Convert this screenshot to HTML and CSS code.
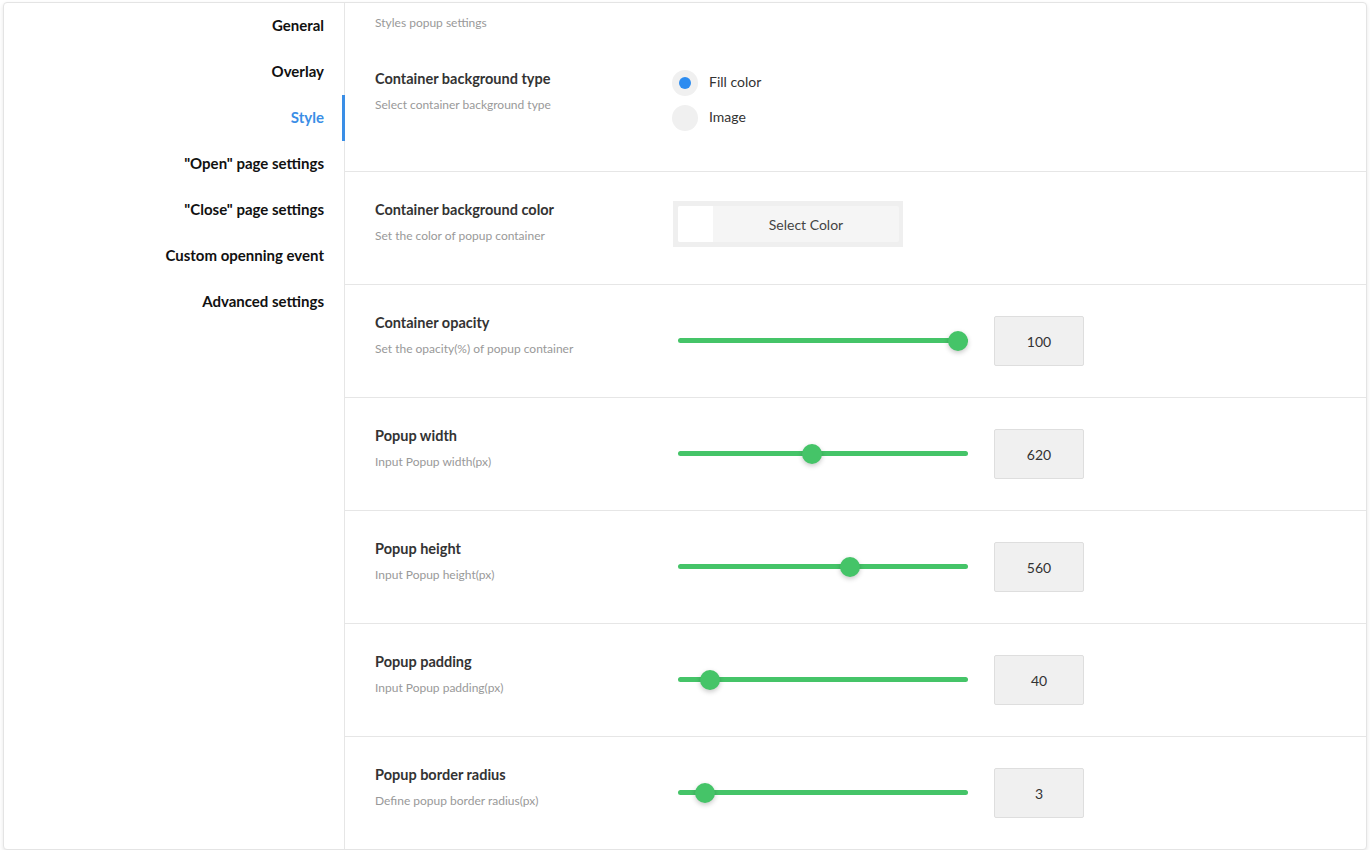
FILE: index.html
```html
<!DOCTYPE html>
<html>
<head>
<meta charset="utf-8">
<link rel="stylesheet" href="styles.css">
</head>
<body>
<div class="card">
  <nav class="sidebar">
    <div class="nav-item">General</div>
    <div class="nav-item">Overlay</div>
    <div class="nav-item active">Style</div>
    <div class="nav-item">"Open" page settings</div>
    <div class="nav-item">"Close" page settings</div>
    <div class="nav-item">Custom openning event</div>
    <div class="nav-item">Advanced settings</div>
  </nav>
  <main class="content">
    <div class="header">Styles popup settings</div>

    <div class="row row-first">
      <div class="label">
        <div class="title">Container background type</div>
        <div class="sub">Select container background type</div>
      </div>
      <div class="control radios">
        <div class="radio checked"><span class="dot"></span><span class="rlabel">Fill color</span></div>
        <div class="radio"><span class="dot"></span><span class="rlabel">Image</span></div>
      </div>
    </div>

    <div class="row">
      <div class="label">
        <div class="title">Container background color</div>
        <div class="sub">Set the color of popup container</div>
      </div>
      <div class="control color-ctl">
        <div class="color-box">
          <div class="color-inner"><span class="swatch"></span><span class="ctext">Select Color</span></div>
        </div>
      </div>
    </div>

    <div class="row">
      <div class="label">
        <div class="title">Container opacity</div>
        <div class="sub">Set the opacity(%) of popup container</div>
      </div>
      <div class="control slider-ctl">
        <div class="track"><span class="thumb" style="left: 96.55%"></span></div>
        <div class="num">100</div>
      </div>
    </div>

    <div class="row">
      <div class="label">
        <div class="title">Popup width</div>
        <div class="sub">Input Popup width(px)</div>
      </div>
      <div class="control slider-ctl">
        <div class="track"><span class="thumb" style="left: 46.2%"></span></div>
        <div class="num">620</div>
      </div>
    </div>

    <div class="row">
      <div class="label">
        <div class="title">Popup height</div>
        <div class="sub">Input Popup height(px)</div>
      </div>
      <div class="control slider-ctl">
        <div class="track"><span class="thumb" style="left: 59.3%"></span></div>
        <div class="num">560</div>
      </div>
    </div>

    <div class="row">
      <div class="label">
        <div class="title">Popup padding</div>
        <div class="sub">Input Popup padding(px)</div>
      </div>
      <div class="control slider-ctl">
        <div class="track"><span class="thumb" style="left: 11.03%"></span></div>
        <div class="num">40</div>
      </div>
    </div>

    <div class="row">
      <div class="label">
        <div class="title">Popup border radius</div>
        <div class="sub">Define popup border radius(px)</div>
      </div>
      <div class="control slider-ctl">
        <div class="track"><span class="thumb" style="left: 9.31%"></span></div>
        <div class="num">3</div>
      </div>
    </div>
  </main>
</div>
</body>
</html>
```

FILE: styles.css
```css
* { box-sizing: border-box; }
html, body {
  margin: 0;
  padding: 0;
  background: #fff;
  font-family: Lato, "Open Sans", sans-serif;
}
.card {
  margin: 2px 3px 0 3px;
  width: 1364px;
  height: 848px;
  border: 1px solid #e4e4e4;
  border-radius: 4px;
  box-shadow: 0 2px 4px rgba(0,0,0,0.10);
  display: flex;
  background: #fff;
  overflow: hidden;
}
.sidebar {
  width: 341px;
  flex: none;
  border-right: 1px solid #e6e6e6;
}
.nav-item {
  position: relative;
  height: 46px;
  line-height: 44px;
  text-align: right;
  padding-right: 20px;
  font-size: 15px;
  font-weight: 700;
  color: #111;
}
.nav-item.active { color: #3a8ee6; }
.nav-item.active::after {
  content: "";
  position: absolute;
  right: -1px;
  top: 0;
  width: 3px;
  height: 46px;
  background: #3a8ee6;
}
.content {
  flex: 1;
  display: flex;
  flex-direction: column;
}
.header {
  height: 37px;
  padding: 11px 0 0 30px;
  font-size: 12px;
  line-height: 18px;
  color: #999;
}
.row {
  display: flex;
  height: 113px;
  border-top: 1px solid #e6e6e6;
  padding: 0 30px;
}
.row-first {
  height: 131px;
  border-top: none;
}
.label {
  width: 298px;
  flex: none;
  padding-top: 28px;
}
.row-first .label { padding-top: 29px; }
.title {
  font-size: 14.5px;
  line-height: 20px;
  font-weight: 700;
  color: #333;
}
.sub {
  margin-top: 7px;
  font-size: 12px;
  line-height: 18px;
  color: #999;
}
.control { display: flex; }
.radios {
  flex-direction: column;
  gap: 9px;
  padding-top: 30px;
}
.radio {
  display: flex;
  align-items: center;
  margin-left: -1px;
}
.radio .dot {
  width: 26px;
  height: 26px;
  border-radius: 50%;
  background: #f0f0f0;
  position: relative;
  flex: none;
}
.radio.checked .dot::after {
  content: "";
  position: absolute;
  left: 7px;
  top: 7px;
  width: 12px;
  height: 12px;
  border-radius: 50%;
  background: #2d8cf0;
}
.rlabel {
  margin-left: 11px;
  margin-top: -3px;
  font-size: 14px;
  line-height: 20px;
  color: #333;
}
.color-ctl { padding-top: 29px; }
.color-box {
  width: 230px;
  height: 46px;
  background: #efefef;
  padding: 5px 4px 5px 5px;
}
.color-inner {
  display: flex;
  height: 36px;
  background: #f5f5f5;
  border-radius: 2px;
  overflow: hidden;
}
.swatch {
  width: 35px;
  background: #fff;
  flex: none;
}
.ctext {
  flex: 1;
  text-align: center;
  line-height: 37px;
  font-size: 14px;
  color: #444;
}
.slider-ctl {
  padding-top: 31px;
  align-items: flex-start;
}
.track {
  position: relative;
  margin-left: 5px;
  margin-top: 22px;
  width: 290px;
  height: 5px;
  border-radius: 3px;
  background: #45c468;
}
.thumb {
  position: absolute;
  top: 50%;
  width: 20px;
  height: 20px;
  margin: -10px 0 0 -10px;
  border-radius: 50%;
  background: #45c468;
  box-shadow: 0 2px 5px rgba(0,0,0,0.22);
}
.num {
  margin-left: 26px;
  width: 90px;
  height: 50px;
  line-height: 50px;
  text-align: center;
  background: #f0f0f0;
  border: 1px solid #dedede;
  border-radius: 2px;
  font-size: 14px;
  color: #333;
}
```
